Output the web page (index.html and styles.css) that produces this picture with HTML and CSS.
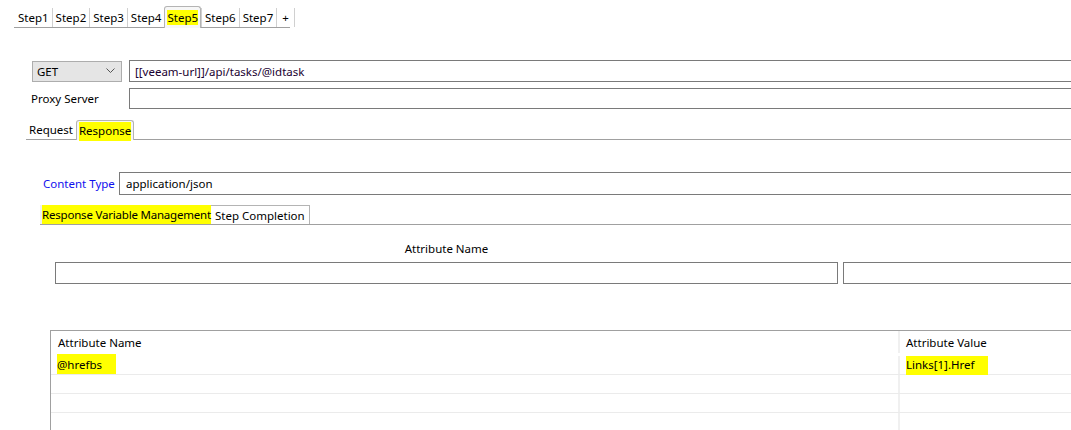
FILE: index.html
```html
<!DOCTYPE html>
<html>
<head>
<meta charset="utf-8">
<link rel="stylesheet" href="styles.css">
</head>
<body>
<div class="page">
  <div class="steptabs">
    <div class="tab first">Step1</div>
    <div class="tab">Step2</div>
    <div class="tab">Step3</div>
    <div class="tab">Step4</div>
    <div class="tab active"><span class="hl">Step5</span></div>
    <div class="tab">Step6</div>
    <div class="tab">Step7</div>
    <div class="tab plus">+</div>
  </div>

  <div class="row req-row">
    <div class="select">
      <span>GET</span>
      <svg class="chev" width="9" height="6" viewBox="0 0 9 6"><path d="M0.5 0.5 L4.5 4.5 L8.5 0.5" fill="none" stroke="#555" stroke-width="1"/></svg>
    </div>
    <div class="input url"><span class="purple">[[veeam-url]]/api/tasks/@idtask</span></div>
  </div>
  <div class="row proxy-row">
    <div class="label proxy">Proxy Server</div>
    <div class="input"></div>
  </div>

  <div class="subtabs">
    <div class="stab first">Request</div>
    <div class="stab active"><span class="hl hl-resp">Response</span></div>
  </div>

  <div class="row ct-row">
    <div class="label blue">Content Type</div>
    <div class="input ct">application/json</div>
  </div>

  <div class="vartabs">
    <div class="vtab active"><span class="hl hl-rvm">Response Variable Management</span></div>
    <div class="vtab">Step Completion</div>
  </div>

  <div class="attr-head">Attribute Name</div>
  <div class="row attr-inputs">
    <div class="input name"></div>
    <div class="input value"></div>
  </div>

  <div class="grid">
    <div class="grow head">
      <div class="gc c1">Attribute Name</div>
      <div class="gc c2">Attribute Value</div>
    </div>
    <div class="grow">
      <div class="gc c1"><span class="hl hl-href">@hrefbs</span></div>
      <div class="gc c2"><span class="hl hl-links">Links[1].Href</span></div>
    </div>
    <div class="grow empty"><div class="gc c1"></div><div class="gc c2"></div></div>
    <div class="grow empty"><div class="gc c1"></div><div class="gc c2"></div></div>
    <div class="grow empty"><div class="gc c1"></div><div class="gc c2"></div></div>
  </div>
</div>
</body>
</html>
```

FILE: styles.css
```css
html, body {
  margin: 0;
  padding: 0;
  background: #ffffff;
  overflow: hidden;
}
body {
  font-family: "Segoe UI", "Noto Sans", "DejaVu Sans", sans-serif;
  font-size: 11.5px;
  color: #000;
  width: 1071px;
  height: 430px;
}
.page {
  width: 1100px;
}

/* top step tabs */
.steptabs {
  display: flex;
  margin: 6px 0 0 14px;
  width: 276px;
  height: 21px;
  border-bottom: 1px solid #a0a0a0;
  align-items: flex-end;
}
.tab {
  height: 19px;
  line-height: 19px;
  padding: 0 3px;
  border-left: 1px solid #d0d0d0;
  box-sizing: border-box;
}
.tab.first { border-left: none; padding-left: 4px; }
.tab.active {
  height: 22px;
  line-height: 22px;
  border: 1px solid #b4b4b4;
  border-bottom: none;
  border-radius: 3px 3px 0 0;
  background: #f7f7f7;
  margin-bottom: -1px;
  padding: 0 2px;
}
.tab.plus { padding: 0 5px; border-right: 1px solid #d0d0d0; }

.hl { background: #ffff00; }

.row { display: flex; align-items: center; }

.req-row { margin: 32px 0 0 32px; }
.select {
  width: 90px;
  height: 21px;
  box-sizing: border-box;
  border: 1px solid #adadad;
  background: #e5e5e5;
  display: flex;
  align-items: center;
  justify-content: space-between;
  padding: 0 6px 0 4px;
}
.chev { display: block; }
.input {
  height: 22px;
  box-sizing: border-box;
  border: 1px solid #7a7a7a;
  background: #fff;
  flex: 1;
  display: flex;
  align-items: center;
  padding-left: 5px;
}
.url { margin-left: 7px; }
.purple { color: #1a0030; }

.proxy-row { margin: 6px 0 0 31px; }
.proxy-row .input { height: 21px; margin-left: 0; }
.label.proxy { width: 98px; }

/* request/response tabs */
.subtabs {
  display: flex;
  margin: 11px 0 0 26px;
  height: 19px;
  border-bottom: 1px solid #a0a0a0;
  align-items: flex-end;
}
.stab {
  height: 18px;
  line-height: 18px;
  padding: 0 2px 0 3px;
  box-sizing: border-box;
}
.stab.active {
  height: 20px;
  line-height: 20px;
  border: 1px solid #b4b4b4;
  border-bottom: none;
  border-radius: 3px 3px 0 0;
  background: #f5f5f5;
  margin-bottom: -1px;
  padding: 0 2px;
  margin-left: 1px;
}
.hl-resp { padding: 1px 0 3px; }

.ct-row { margin: 32px 0 0 43px; }
.label.blue { color: #1010ee; width: 76px; }
.ct { height: 23px; padding-left: 6px; }

/* variable tabs */
.vartabs {
  display: flex;
  margin: 10px 0 0 40px;
  height: 19px;
  border-bottom: 1px solid #a0a0a0;
  align-items: flex-end;
}
.vtab {
  height: 19px;
  line-height: 19px;
  padding: 0 4px 0 4px;
  box-sizing: border-box;
  border: 1px solid #b4b4b4;
  border-bottom: none;
  border-left: none;
}
.vtab.active {
  background: #f0f0f0;
  padding: 0 0 0 2px;
  border: none;
}
.hl-rvm { padding: 2px 0 2px 0; letter-spacing: -0.2px; }

.attr-head {
  margin: 16px 0 0 55px;
  width: 783px;
  text-align: center;
  height: 16px;
}
.attr-inputs { margin: 5px 0 0 55px; }
.attr-inputs .input { height: 22px; }
.input.name { flex: none; width: 783px; }
.input.value { margin-left: 5px; }

/* grid */
.grid {
  margin: 46px 0 0 50px;
  border-top: 1px solid #a0a0a0;
  border-left: 1px solid #a0a0a0;
  height: 110px;
}
.grow {
  display: flex;
  height: 19px;
  border-bottom: 1px solid #ebebeb;
  box-sizing: border-box;
}
.grow.head { height: 25px; border-bottom: none; align-items: flex-start; padding-top: 3px; box-sizing: border-box; }
.gc {
  line-height: 18px;
  box-sizing: border-box;
}
.gc.c1 { width: 849px; padding-left: 7px; border-right: 2px solid #f0f0f0; }
.grow.head .gc.c1 { height: 22px; margin-top: -3px; padding-top: 3px; }
.gc.c2 { flex: 1; padding-left: 6px; }
.grow.empty { height: 19px; }
.hl-href { padding: 3px 14px 2px 0; margin-left: -1px; }
.hl-links { padding: 1px 14px 3px 0; }
```
